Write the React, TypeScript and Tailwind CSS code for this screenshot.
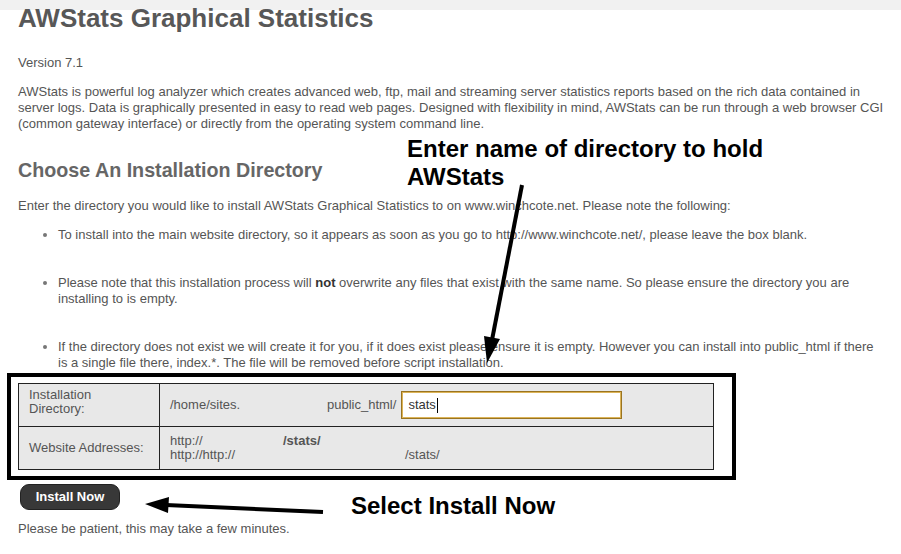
import React from "react";

export default function App() {
  return (
    <div className="relative w-[901px] h-[554px] overflow-hidden bg-white font-['Liberation_Sans',Arial,sans-serif] text-[#555]">
      <div className="absolute left-0 top-0 w-[901px] h-[10px] bg-[#f1f1f1]" />

      <div className="relative px-[18px]">
        <h1 className="mt-[3px] text-[26px] leading-[30px] font-bold text-[#585858] whitespace-nowrap">
          AWStats Graphical Statistics
        </h1>

        <p className="mt-[22px] text-[13px] leading-[16px]">Version 7.1</p>

        <p className="mt-[13px] text-[13px] leading-[16px] whitespace-nowrap">
          AWStats is powerful log analyzer which creates advanced web, ftp, mail and streaming server statistics reports based on the rich data contained in
          <br />
          server logs. Data is graphically presented in easy to read web pages. Designed with flexibility in mind, AWStats can be run through a web browser CGI
          <br />
          (common gateway interface) or directly from the operating system command line.
        </p>

        <h2 className="mt-[26px] text-[19.7px] leading-[24px] font-bold text-[#666] whitespace-nowrap">
          Choose An Installation Directory
        </h2>

        <p className="mt-[16px] text-[13px] leading-[16px] whitespace-nowrap">
          Enter the directory you would like to install AWStats Graphical Statistics to on www.winchcote.net. Please note the following:
        </p>

        <ul className="mt-[13px] list-disc pl-[40px] text-[13px] leading-[16px] whitespace-nowrap marker:text-[#777]">
          <li className="mb-[32px]">
            To install into the main website directory, so it appears as soon as you go to http://www.winchcote.net/, please leave the box blank.
          </li>
          <li className="mb-[32px]">
            Please note that this installation process will <b className="text-[#333]">not</b> overwrite any files that exist with the same name. So please ensure the directory you are
            <br />
            installing to is empty.
          </li>
          <li>
            If the directory does not exist we will create it for you, if it does exist please ensure it is empty. However you can install into public_html if there
            <br />
            is a single file there, index.*. The file will be removed before script installation.
          </li>
        </ul>

        {/* annotation box */}
        <div className="mt-[2px] ml-[-11px] w-[729px] border-4 border-black pt-[6px] pb-[6px] pl-[7px]">
          <div className="w-[696px] border border-[#222] bg-[#e8e8e8] text-[13px] leading-[14px]">
            <div className="flex h-[43px] border-b border-[#222]">
              <div className="w-[141px] shrink-0 border-r border-[#222] flex items-center pl-[10px] pb-[6px]">
                <div>
                  Installation
                  <br />
                  Directory:
                </div>
              </div>
              <div className="flex items-center pl-[10px] whitespace-nowrap">
                <span className="inline-block w-[157px]">/home/sites.</span>
                <span>public_html/</span>
                <div className="ml-[5px] w-[221px] h-[28px] bg-white border border-[#9a7420] shadow-[inset_0_0_0_1px_#dcb458] flex items-center pl-[6px] text-[#333]">
                  stats
                  <span className="ml-[1px] inline-block w-[1px] h-[15px] bg-black" />
                </div>
              </div>
            </div>
            <div className="flex h-[42px]">
              <div className="w-[141px] shrink-0 border-r border-[#222] flex items-center pl-[10px]">
                Website Addresses:
              </div>
              <div className="flex flex-col justify-center pl-[10px] whitespace-nowrap">
                <div className="flex">
                  <span className="inline-block w-[113px]">http://</span>
                  <b className="text-[#555]">/stats/</b>
                </div>
                <div className="flex">
                  <span className="inline-block w-[235px]">http://http://</span>
                  <span>/stats/</span>
                </div>
              </div>
            </div>
          </div>
        </div>

        <button className="mt-[4px] ml-[2px] flex items-center justify-center w-[100px] h-[26px] rounded-[9px] bg-[#383838] border border-[#222] text-white text-[13px] font-bold">
          Install Now
        </button>

        <p className="mt-[11px] text-[13px] leading-[16px]">Please be patient, this may take a few minutes.</p>
      </div>

      {/* annotations */}
      <div className="absolute left-[407px] top-[135px] text-[24px] leading-[28px] font-bold text-black whitespace-nowrap">
        Enter name of directory to hold
        <br />
        AWStats
      </div>
      <div className="absolute left-[351px] top-[492px] text-[24px] leading-[28px] font-bold text-black whitespace-nowrap">
        Select Install Now
      </div>

      <svg className="absolute left-0 top-0 pointer-events-none" width="901" height="554" viewBox="0 0 901 554">
        <line x1="522" y1="185" x2="492" y2="340" stroke="black" strokeWidth="4" />
        <polygon points="487,363 500,339 484,336" fill="black" />
        <line x1="323" y1="512" x2="166" y2="505" stroke="black" strokeWidth="4" />
        <polygon points="145,504 169,497 168,513" fill="black" />
      </svg>
    </div>
  );
}
